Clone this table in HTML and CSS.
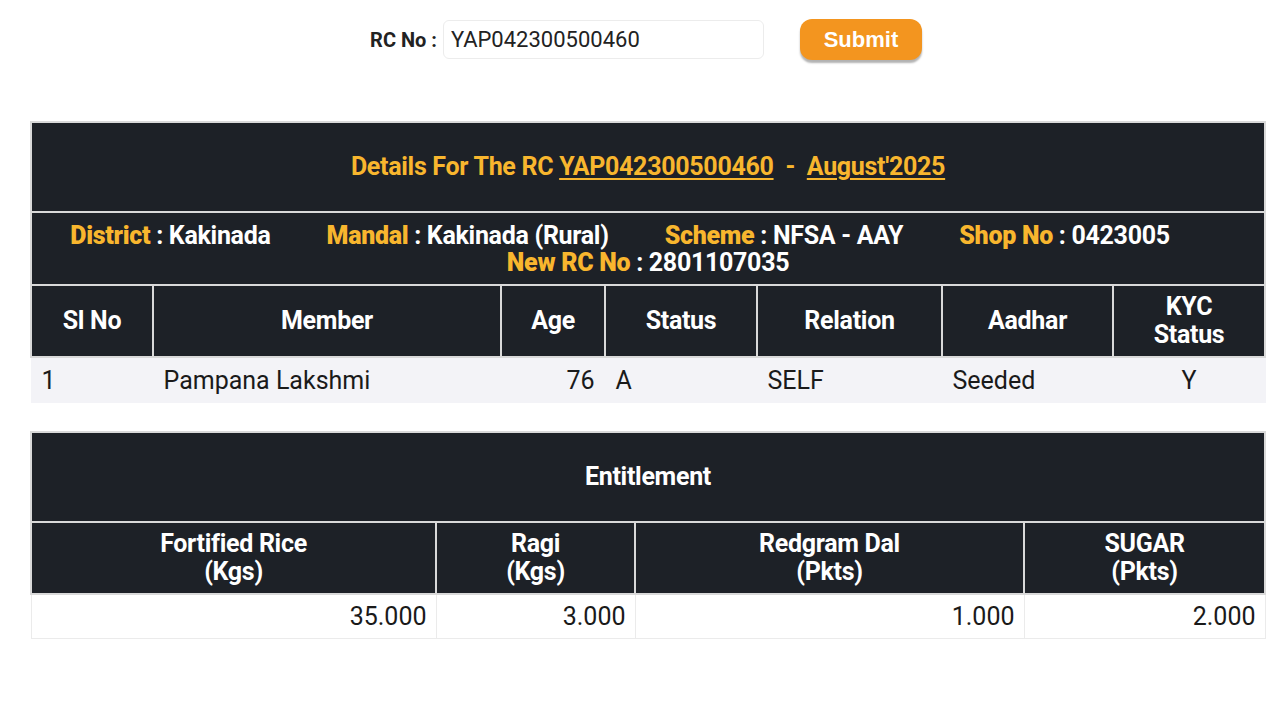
FILE: index.html
```html
<!DOCTYPE html>
<html lang="en">
  <head>
    <meta charset="UTF-8" />
    <meta name="viewport" content="width=device-width, initial-scale=1.0" />
    <title>RC Details</title>
    <link rel="stylesheet" href="styles.css">
  </head>

  <body>
    <form class="search-form">
      <label for="rc-input">RC No :</label>
      <input id="rc-input" type="text" value="YAP042300500460" />
      <button type="button" id="submit-btn">Submit</button>
    </form>

    <table class="rc-table members">
      <colgroup>
        <col class="c-sl" />
        <col class="c-member" />
        <col class="c-age" />
        <col class="c-status" />
        <col class="c-relation" />
        <col class="c-aadhar" />
        <col class="c-kyc" />
      </colgroup>
      <tr>
        <th colspan="7" class="title">
          Details For The RC <u>YAP042300500460</u> &nbsp;-&nbsp; <u>August'2025</u>
        </th>
      </tr>
      <tr>
        <th colspan="7" class="info">
          <span class="info-item"><b>District</b> : Kakinada</span><span class="info-item"><b>Mandal</b> : Kakinada (Rural)</span><span class="info-item"><b>Scheme</b> : NFSA - AAY</span><span class="info-item"><b>Shop No</b> : 0423005</span>
          <br />
          <span><b>New RC No</b> : 2801107035</span>
        </th>
      </tr>
      <tr class="head">
        <th>Sl No</th>
        <th>Member</th>
        <th>Age</th>
        <th>Status</th>
        <th>Relation</th>
        <th>Aadhar</th>
        <th>KYC<br />Status</th>
      </tr>
      <tr class="row">
        <td>1</td>
        <td>Pampana Lakshmi</td>
        <td class="num">76</td>
        <td>A</td>
        <td>SELF</td>
        <td>Seeded</td>
        <td class="mid">Y</td>
      </tr>
    </table>

    <table class="rc-table entitlement">
      <colgroup>
        <col class="c-rice" />
        <col class="c-ragi" />
        <col class="c-dal" />
        <col class="c-sugar" />
      </colgroup>
      <tr>
        <th colspan="4" class="title white">Entitlement</th>
      </tr>
      <tr class="head">
        <th>Fortified Rice<br />(Kgs)</th>
        <th>Ragi<br />(Kgs)</th>
        <th>Redgram Dal<br />(Pkts)</th>
        <th>SUGAR<br />(Pkts)</th>
      </tr>
      <tr class="row plain">
        <td class="num">35.000</td>
        <td class="num">3.000</td>
        <td class="num">1.000</td>
        <td class="num">2.000</td>
      </tr>
    </table>
  </body>
</html>
```

FILE: styles.css
```css
body {
  margin: 0;
  background-color: #ffffff;
  font-family: Roboto, "Liberation Sans", Arial, sans-serif;
  color: #1a1a1a;
}

.search-form {
  display: flex;
  justify-content: center;
  align-items: center;
  margin: 19px 0 0 0;
  padding-left: 12px;
  height: 41px;
}

.search-form label {
  font-size: 20px;
  font-weight: bold;
  color: #222;
  margin-right: 6px;
}

#rc-input {
  box-sizing: border-box;
  width: 321px;
  height: 39px;
  padding: 0 7px;
  border: 1px solid #ececec;
  border-radius: 6px;
  font-family: Roboto, sans-serif;
  font-size: 22px;
  color: #222;
  outline: none;
}

#submit-btn {
  width: 122px;
  height: 41px;
  margin-left: 36px;
  background-color: #f3951f;
  border: none;
  border-radius: 12px;
  color: #fff;
  font-family: "Liberation Sans", Arial, sans-serif;
  font-size: 22px;
  font-weight: bold;
  box-shadow: 0 3px 2px rgba(0, 0, 0, 0.3);
}

.rc-table {
  width: 1234px;
  margin-left: 30px;
  border-collapse: collapse;
  table-layout: fixed;
}

.members {
  margin-top: 61px;
}

.entitlement {
  margin-top: 28px;
}

.rc-table th {
  background-color: #1d2127;
  color: #ffffff;
  border: 2px solid #d9d9d9;
  font-size: 25px;
  font-weight: bold;
  letter-spacing: -0.3px;
  line-height: 28px;
}

.title {
  height: 88px;
  padding: 0;
  color: #f8b62e !important;
}

.title.white {
  color: #ffffff !important;
}

.title u {
  text-decoration-thickness: 2px;
  text-underline-offset: 3px;
}

.info {
  height: 71px;
  line-height: 27px !important;
  padding: 0;
}

.info b {
  color: #f8b62e;
}

.info-item {
  margin-right: 56px;
}

.head th {
  height: 70px;
  padding: 0;
}

.row td {
  height: 45px;
  padding: 0 10px;
  font-size: 25px;
  background-color: #f3f3f7;
  border-left: 1px solid #f3f3f7;
  border-right: 1px solid #f3f3f7;
  color: #1a1a1a;
}

.row.plain td {
  height: 43px;
  background-color: #ffffff;
  border: 1px solid #ebebeb;
  padding: 0 9px;
}

.num {
  text-align: right;
}

.mid {
  text-align: center;
}

.c-sl { width: 122px; }
.c-member { width: 348px; }
.c-age { width: 104px; }
.c-status { width: 152px; }
.c-relation { width: 185px; }
.c-aadhar { width: 171px; }
.c-kyc { width: 152px; }

.c-rice { width: 405px; }
.c-ragi { width: 199px; }
.c-dal { width: 389px; }
.c-sugar { width: 241px; }
```
